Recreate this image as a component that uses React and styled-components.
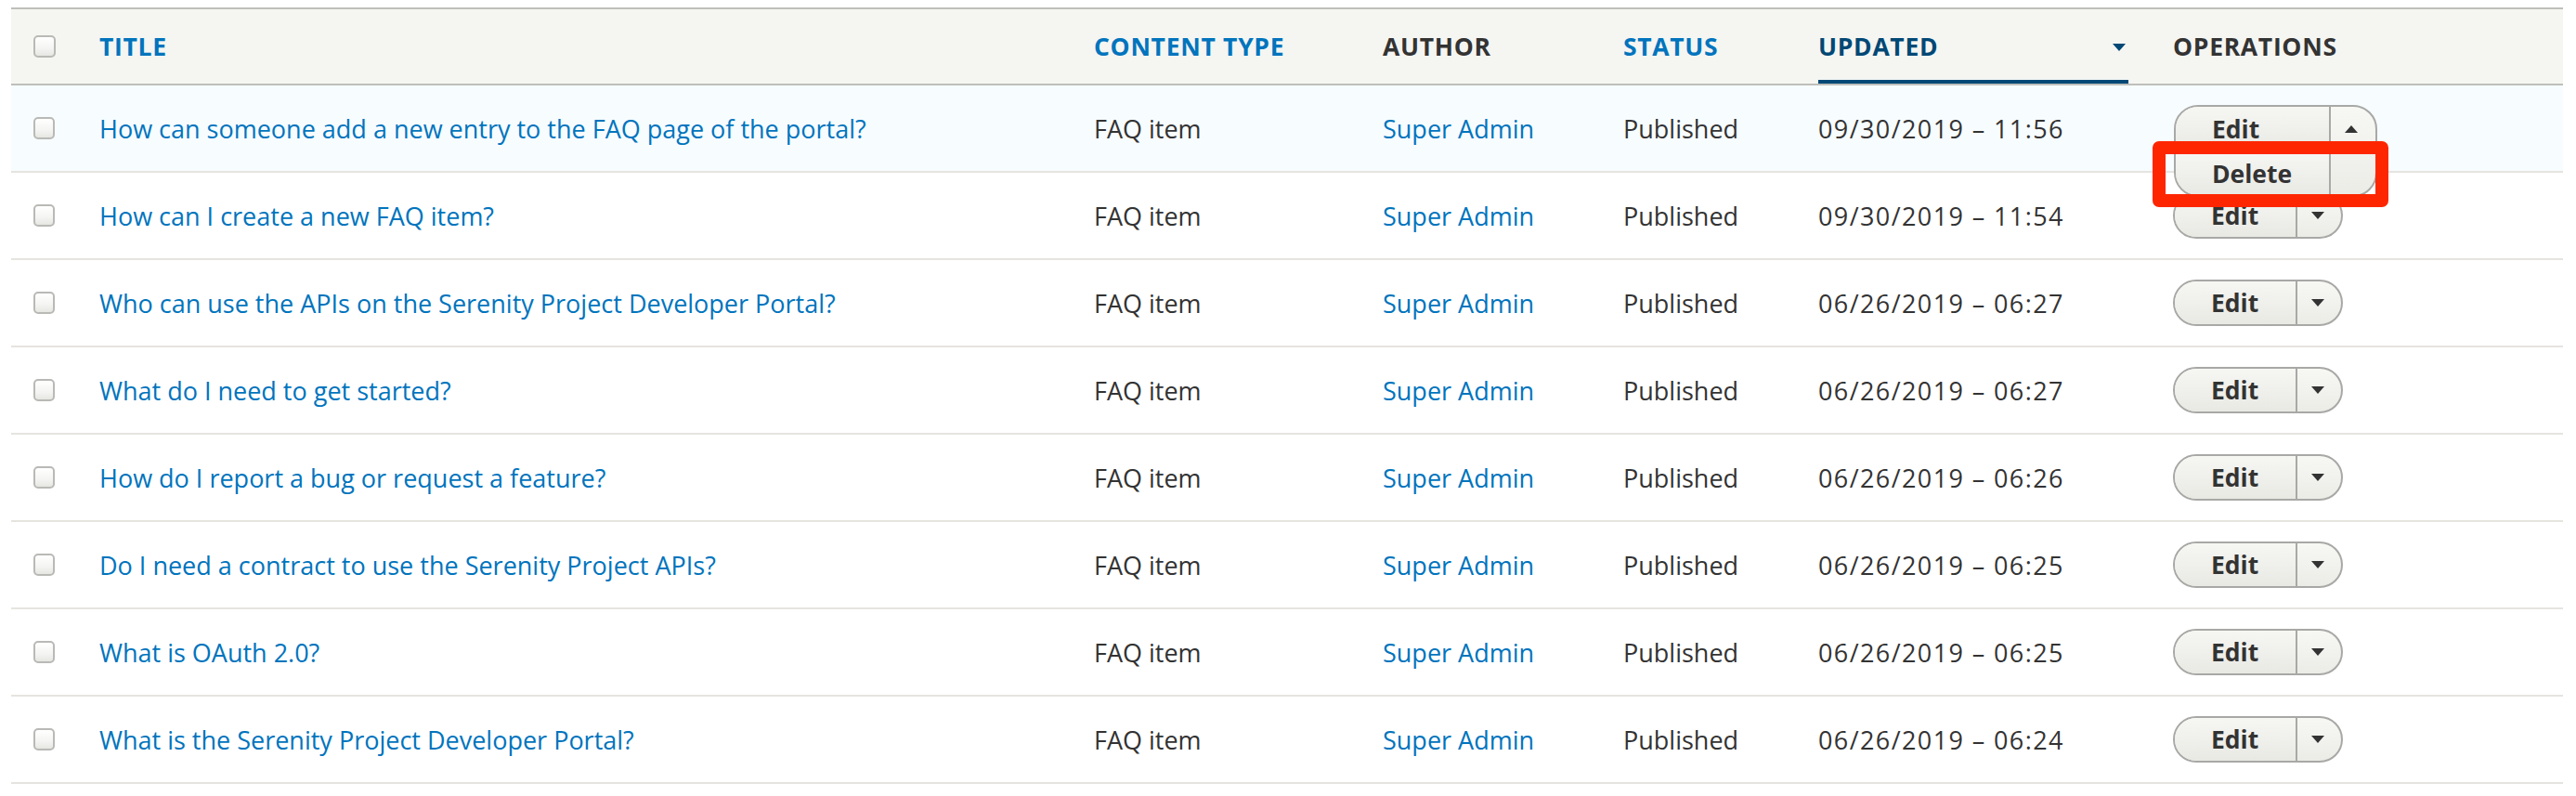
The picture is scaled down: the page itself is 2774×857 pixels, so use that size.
import React from "react";
import styled, { createGlobalStyle, css } from "styled-components";

const GlobalStyle = createGlobalStyle`
  html, body {
    margin: 0;
    padding: 0;
    background: #ffffff;
  }
  body {
    font-family: "Open Sans", "DejaVu Sans", sans-serif;
    font-size: 27px;
    color: #333333;
  }
`;

const COLUMNS = "71px 1071px 311px 259px 210px 382px 444px";

const Table = styled.div`
  width: 2748px;
  margin: 8px 0 0 12px;
`;

const HeaderRow = styled.div`
  display: grid;
  grid-template-columns: ${COLUMNS};
  box-sizing: border-box;
  height: 84px;
  background: #f5f5f2;
  border-top: 2px solid #bfbfba;
  border-bottom: 2px solid #bfbfba;
`;

const HeadCell = styled.div`
  box-sizing: border-box;
  padding: 0 24px;
  display: flex;
  align-items: stretch;
`;

const HeadLabel = styled.div`
  flex: 1;
  display: flex;
  align-items: center;
  justify-content: space-between;
  font-size: 26.5px;
  font-weight: 700;
  letter-spacing: 0.7px;
  text-transform: uppercase;
  color: ${({ $tone }) =>
    $tone === "link" ? "#0074bd" : $tone === "active" ? "#004875" : "#333333"};
  ${({ $tone }) =>
    $tone === "active" &&
    css`
      box-shadow: inset 0 -4px 0 #004875;
    `}
`;

const SortIcon = styled.svg`
  width: 14px;
  height: 8px;
  margin-right: 3px;
  margin-top: 1px;
`;

const Row = styled.div`
  display: grid;
  grid-template-columns: ${COLUMNS};
  box-sizing: border-box;
  height: 94px;
  border-bottom: 2px solid #e6e4df;
  background: ${({ $active }) => ($active ? "#f7fcff" : "#ffffff")};
`;

const Cell = styled.div`
  box-sizing: border-box;
  padding: 0 24px;
  display: flex;
  align-items: center;
  white-space: nowrap;
`;

const Link = styled.a`
  color: #0074bd;
  text-decoration: none;
`;

const DateText = styled.span`
  letter-spacing: 1.4px;
`;

const Check = styled.input.attrs({ type: "checkbox" })`
  appearance: none;
  margin: 0;
  width: 24px;
  height: 24px;
  box-sizing: border-box;
  border: 2px solid #b9b9b6;
  border-radius: 5px;
  background: linear-gradient(to bottom, #ffffff 0%, #f4f4f2 60%, #e6e6e3 100%);
`;

const DropWrap = styled.div`
  position: relative;
  height: 50px;
  width: 183px;
`;

const Widget = styled.div`
  display: flex;
  box-sizing: border-box;
  border: 2px solid #a8a8a6;
  border-radius: 26px;
  overflow: hidden;
  background: linear-gradient(to bottom, #f7f7f4 0%, #ecece7 100%);
  ${({ $open }) =>
    $open &&
    css`
      position: absolute;
      top: 0;
      left: 1px;
      z-index: 2;
    `}
`;

const Items = styled.div`
  display: flex;
  flex-direction: column;
`;

const Action = styled.a`
  box-sizing: border-box;
  height: ${({ $h }) => $h}px;
  padding: 0 40px 0 39px;
  display: flex;
  align-items: center;
  font-size: 26.5px;
  font-weight: 700;
  color: #333333;
  background: linear-gradient(to bottom, #f6f6f3 0%, #e9e9e4 100%);
`;

const Toggle = styled.div`
  width: 48px;
  border-left: 2px solid #a8a8a6;
  display: flex;
  flex-direction: column;
  align-items: center;
`;

const ArrowBox = styled.div`
  height: ${({ $h }) => $h}px;
  display: flex;
  align-items: center;
  justify-content: center;
  padding-right: 4px;
`;

const Highlight = styled.div`
  position: absolute;
  left: -22px;
  top: 39px;
  width: 254px;
  height: 71px;
  box-sizing: border-box;
  border: 14px solid #fe2600;
  border-radius: 7px;
  z-index: 3;
  pointer-events: none;
`;

const Triangle = ({ up, color = "#333333" }) => (
  <svg width="14" height="8" viewBox="0 0 14 8">
    <polygon points={up ? "0,8 14,8 7,0" : "0,0 14,0 7,8"} fill={color} />
  </svg>
);

const DropButton = ({ open }) => (
  <DropWrap>
    <Widget $open={open}>
      <Items>
        <Action $h={open ? 48 : 46}>Edit</Action>
        {open && <Action $h={47}>Delete</Action>}
      </Items>
      <Toggle>
        <ArrowBox $h={open ? 48 : 46}>
          <Triangle up={open} />
        </ArrowBox>
      </Toggle>
    </Widget>
    {open && <Highlight />}
  </DropWrap>
);

const rows = [
  ["How can someone add a new entry to the FAQ page of the portal?", "09/30/2019 – 11:56"],
  ["How can I create a new FAQ item?", "09/30/2019 – 11:54"],
  ["Who can use the APIs on the Serenity Project Developer Portal?", "06/26/2019 – 06:27"],
  ["What do I need to get started?", "06/26/2019 – 06:27"],
  ["How do I report a bug or request a feature?", "06/26/2019 – 06:26"],
  ["Do I need a contract to use the Serenity Project APIs?", "06/26/2019 – 06:25"],
  ["What is OAuth 2.0?", "06/26/2019 – 06:25"],
  ["What is the Serenity Project Developer Portal?", "06/26/2019 – 06:24"],
];

const App = () => {
  return (
    <>
      <GlobalStyle />
      <Table>
        <HeaderRow>
          <HeadCell>
            <HeadLabel>
              <Check />
            </HeadLabel>
          </HeadCell>
          <HeadCell>
            <HeadLabel $tone="link">Title</HeadLabel>
          </HeadCell>
          <HeadCell>
            <HeadLabel $tone="link">Content type</HeadLabel>
          </HeadCell>
          <HeadCell>
            <HeadLabel>Author</HeadLabel>
          </HeadCell>
          <HeadCell>
            <HeadLabel $tone="link">Status</HeadLabel>
          </HeadCell>
          <HeadCell>
            <HeadLabel $tone="active">
              Updated
              <SortIcon viewBox="0 0 14 8">
                <polygon points="0,0 14,0 7,8" fill="#004875" />
              </SortIcon>
            </HeadLabel>
          </HeadCell>
          <HeadCell>
            <HeadLabel>Operations</HeadLabel>
          </HeadCell>
        </HeaderRow>

        {rows.map(([title, updated], i) => (
          <Row key={title} $active={i === 0}>
            <Cell>
              <Check />
            </Cell>
            <Cell>
              <Link>{title}</Link>
            </Cell>
            <Cell>FAQ item</Cell>
            <Cell>
              <Link>Super Admin</Link>
            </Cell>
            <Cell>Published</Cell>
            <Cell>
              <DateText>{updated}</DateText>
            </Cell>
            <Cell>
              <DropButton open={i === 0} />
            </Cell>
          </Row>
        ))}
      </Table>
    </>
  );
};

export default App;
